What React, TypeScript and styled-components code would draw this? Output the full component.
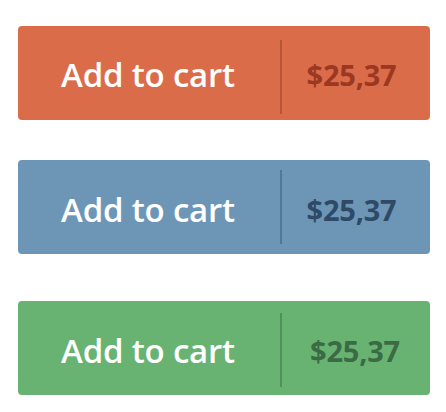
import styled, { createGlobalStyle } from "styled-components"

const GlobalStyle = createGlobalStyle`
    html, body {
        margin: 0;
        padding: 0;
        background: #FFFFFF;
        font-family: "Open Sans", "Liberation Sans", sans-serif;
    }
`

type Tone = {
    base: string
    line: string
    price: string
}

const tones: Record<string, Tone> = {
    orange: { base: "#DB6C4A", line: "#B4553A", price: "#9A3822" },
    blue: { base: "#6D96B6", line: "#4F7797", price: "#2E4A66" },
    green: { base: "#69B372", line: "#4F9159", price: "#3B6B44" },
}

const Page = styled.div`
    display: flex;
    flex-direction: column;
    padding: 26px 16px 0 18px;
`

const CartButton = styled.button<{ $tone: Tone; $gap: number }>`
    display: flex;
    align-items: stretch;
    width: 412px;
    height: 94px;
    margin: ${(p) => p.$gap}px 0 0;
    padding: 0;
    border: none;
    border-radius: 4px;
    background: ${(p) => p.$tone.base};
    cursor: pointer;
    font-family: inherit;
`

const Label = styled.span<{ $shift: number }>`
    box-sizing: border-box;
    flex: 0 0 262px;
    display: flex;
    align-items: center;
    justify-content: center;
    padding: ${(p) => p.$shift}px 2px 0 0;
    color: #FFFFFF;
    font-size: 33px;
    font-weight: 600;
    letter-spacing: -0.2px;
`

const Divider = styled.span<{ $tone: Tone; $offset: number }>`
    flex: 0 0 2px;
    height: 74px;
    margin-top: ${(p) => p.$offset}px;
    background: ${(p) => p.$tone.line};
`

const Price = styled.span<{ $tone: Tone; $shift: number; $nudge: number }>`
    box-sizing: border-box;
    flex: 1;
    display: flex;
    align-items: center;
    justify-content: center;
    padding: ${(p) => p.$shift}px ${(p) => p.$nudge}px 0 0;
    color: ${(p) => p.$tone.price};
    font-size: 29px;
    font-weight: 700;
    letter-spacing: -0.2px;
`

const buttons = [
    { tone: tones.orange, gap: 0, offset: 14, shift: 3, nudge: 9 },
    { tone: tones.blue, gap: 40, offset: 10, shift: 5, nudge: 9 },
    { tone: tones.green, gap: 47, offset: 12, shift: 5, nudge: 2 },
]

export default function App() {
    return (
        <>
            <GlobalStyle />
            <Page>
                {buttons.map((b, i) => (
                    <CartButton key={i} $tone={b.tone} $gap={b.gap}>
                        <Label $shift={b.shift}>Add to cart</Label>
                        <Divider $tone={b.tone} $offset={b.offset} />
                        <Price $tone={b.tone} $shift={b.shift} $nudge={b.nudge}>$25,37</Price>
                    </CartButton>
                ))}
            </Page>
        </>
    )
}
